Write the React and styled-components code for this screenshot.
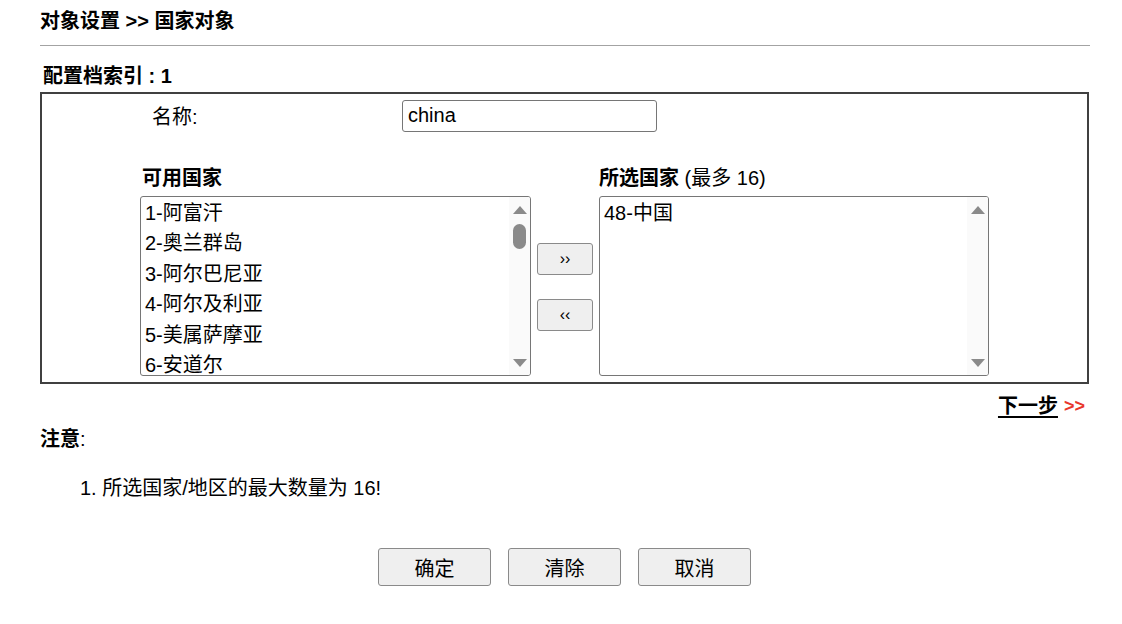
import React from "react";
import styled, { createGlobalStyle } from "styled-components";

const GlobalStyle = createGlobalStyle`
  body {
    margin: 0;
    background: #fff;
    font-family: "Liberation Sans", Arial, "Noto Sans CJK SC", sans-serif;
    font-size: 20px;
    color: #000;
  }
`;

const Page = styled.div`
  width: 1049px;
  margin-left: 40px;
  padding-top: 8px;
`;

const Title = styled.div`
  font-weight: bold;
  font-size: 20px;
  line-height: 26px;
  height: 26px;
`;

const Rule = styled.div`
  height: 1px;
  background: #a3a3a3;
  margin-top: 11px;
  width: 1050px;
`;

const IndexLabel = styled.div`
  font-weight: bold;
  margin-top: 17px;
  padding-left: 3px;
  line-height: 26px;
  height: 26px;
`;

const Frame = styled.div`
  margin-top: 3px;
  border: 2px solid #404040;
  height: 292px;
  box-sizing: border-box;
  padding: 5px 0 0 98px;
`;

const NameRow = styled.div`
  display: flex;
  align-items: center;
  height: 33px;
`;

const NameLabel = styled.div`
  width: 262px;
  padding-left: 12px;
  box-sizing: border-box;
`;

const TextInput = styled.input`
  width: 255px;
  height: 32px;
  box-sizing: border-box;
  border: 1px solid #767676;
  border-radius: 3px;
  padding: 0 5px;
  font-family: inherit;
  font-size: 20px;
  color: #000;
  outline: none;
`;

const Lists = styled.div`
  display: flex;
  align-items: flex-start;
  margin-top: 33px;
`;

const ListColumn = styled.div`
  display: flex;
  flex-direction: column;
  width: ${(p) => p.$w}px;
`;

const ListHeader = styled.div`
  height: 26px;
  line-height: 26px;
  padding-left: ${(p) => p.$pad}px;
  margin-bottom: 5px;
  white-space: nowrap;
  b {
    font-weight: bold;
  }
`;

const ListBox = styled.div`
  display: flex;
  height: 180px;
  border: 1px solid #767676;
  border-radius: 3px;
  box-sizing: border-box;
  overflow: hidden;
  background: #fff;
`;

const Items = styled.div`
  flex: 1;
  padding: 1px 0 0 4px;
  overflow: hidden;
`;

const Item = styled.div`
  height: 30.4px;
  line-height: 30px;
  white-space: nowrap;
`;

const ScrollTrack = styled.div`
  width: 21px;
  background: #fafafa;
  display: flex;
  flex-direction: column;
  align-items: center;
  padding: 9px 0 8px;
  box-sizing: border-box;
`;

const Arrow = styled.div`
  width: 0;
  height: 0;
  border-left: 7px solid transparent;
  border-right: 7px solid transparent;
  ${(p) =>
    p.$down
      ? "border-top: 8px solid #8a8a8a; margin-top: auto;"
      : "border-bottom: 8px solid #8a8a8a;"}
`;

const Thumb = styled.div`
  width: 13px;
  height: 25px;
  border-radius: 7px;
  background: #8a8a8a;
  margin-top: 10px;
`;

const MoveColumn = styled.div`
  width: 68px;
  display: flex;
  flex-direction: column;
  align-items: center;
  padding-top: 78px;
  gap: 24px;
`;

const SmallButton = styled.button`
  width: 56px;
  height: 32px;
  border: 1px solid #8a8a8a;
  border-radius: 3px;
  background: #efefef;
  font-family: inherit;
  font-size: 16px;
  padding: 0;
  color: #000;
`;

const NextRow = styled.div`
  display: flex;
  justify-content: flex-end;
  padding-right: 4px;
  margin-top: 9px;
  line-height: 26px;
  font-weight: bold;
`;

const NextLink = styled.a`
  color: #000;
  text-decoration: underline;
  text-decoration-thickness: 2px;
  text-underline-offset: 3px;
`;

const NextArrow = styled.span`
  color: #e8372c;
  font-weight: bold;
  font-size: 18px;
  margin-left: 6px;
`;

const NoteTitle = styled.div`
  margin-top: 7px;
  line-height: 26px;
  b {
    font-weight: bold;
  }
`;

const NoteItem = styled.div`
  margin-top: 23px;
  padding-left: 40px;
  line-height: 26px;
`;

const ButtonBar = styled.div`
  display: flex;
  justify-content: center;
  gap: 17px;
  margin-top: 47px;
`;

const ActionButton = styled.button`
  width: 113px;
  height: 38px;
  border: 1px solid #8a8a8a;
  border-radius: 3px;
  background: #efefef;
  font-family: inherit;
  font-size: 20px;
  color: #000;
  padding: 0;
`;

const available = [
  "1-阿富汗",
  "2-奥兰群岛",
  "3-阿尔巴尼亚",
  "4-阿尔及利亚",
  "5-美属萨摩亚",
  "6-安道尔",
];

function Scroller({ thumb }) {
  return (
    <ScrollTrack>
      <Arrow />
      {thumb && <Thumb />}
      <Arrow $down />
    </ScrollTrack>
  );
}

export default function App() {
  return (
    <>
      <GlobalStyle />
      <Page>
        <Title>对象设置 &gt;&gt; 国家对象</Title>
        <Rule />
        <IndexLabel>配置档索引 : 1</IndexLabel>
        <Frame>
          <NameRow>
            <NameLabel>名称:</NameLabel>
            <TextInput defaultValue="china" />
          </NameRow>
          <Lists>
            <ListColumn $w={391}>
              <ListHeader $pad={2}>
                <b>可用国家</b>
              </ListHeader>
              <ListBox>
                <Items>
                  {available.map((c) => (
                    <Item key={c}>{c}</Item>
                  ))}
                </Items>
                <Scroller thumb />
              </ListBox>
            </ListColumn>
            <MoveColumn>
              <SmallButton>››</SmallButton>
              <SmallButton>‹‹</SmallButton>
            </MoveColumn>
            <ListColumn $w={390}>
              <ListHeader $pad={0}>
                <b>所选国家</b> (最多 16)
              </ListHeader>
              <ListBox>
                <Items>
                  <Item>48-中国</Item>
                </Items>
                <Scroller />
              </ListBox>
            </ListColumn>
          </Lists>
        </Frame>
        <NextRow>
          <NextLink href="#">下一步</NextLink>
          <NextArrow>&gt;&gt;</NextArrow>
        </NextRow>
        <NoteTitle>
          <b>注意</b>:
        </NoteTitle>
        <NoteItem>1. 所选国家/地区的最大数量为 16!</NoteItem>
        <ButtonBar>
          <ActionButton>确定</ActionButton>
          <ActionButton>清除</ActionButton>
          <ActionButton>取消</ActionButton>
        </ButtonBar>
      </Page>
    </>
  );
}
